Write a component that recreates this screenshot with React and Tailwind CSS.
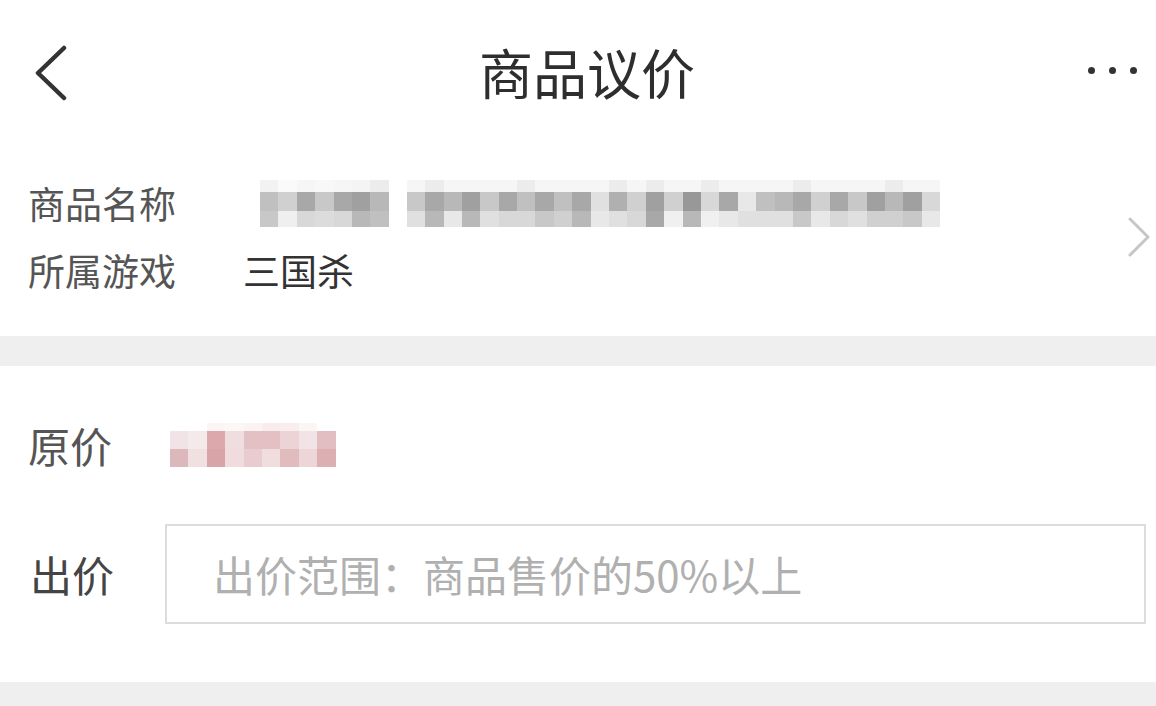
import React from "react";

const FONT = { fontFamily: '"Noto Sans CJK SC", "Noto Sans", sans-serif' };

const nameTop1 = ["#f2f2f2", "#fafafa", "#f6f6f6", "#f8f8f8", "#f6f6f6", "#f4f4f4", "#ececec"];
const nameMid1 = ["#c0c0c0", "#d0d0d0", "#a8a8a8", "#c8c8c8", "#a8a8a8", "#a0a0a0", "#b8b8b8"];
const nameBot1 = ["#c8c8c8", "#efefef", "#d8d8d8", "#dcdcdc", "#d8d8d8", "#b8b8b8", "#c0c0c0"];

const nameMid2 = [
  "#c8c8c8", "#a8a8a8", "#b8b8b8", "#a0a0a0", "#c8c8c8", "#a8a8a8", "#c0c0c0", "#a8a8a8",
  "#c0c0c0", "#a8a8a8", "#e0e0e0", "#b0b0b0", "#d0d0d0", "#a0a0a0", "#d0d0d0", "#989898",
  "#d8d8d8", "#a8a8a8", "#e8e8e8", "#c0c0c0", "#b8b8b8", "#a8a8a8", "#d0d0d0", "#a8a8a8",
  "#c8c8c8", "#a0a0a0", "#b8b8b8", "#a0a0a0", "#d8d8d8",
];
const nameBot2 = [
  "#e0e0e0", "#b8b8b8", "#e8e8e8", "#b8b8b8", "#e0e0e0", "#d8d8d8", "#d8d8d8", "#c8c8c8",
  "#d0d0d0", "#b8b8b8", "#e8e8e8", "#e0e0e0", "#d8d8d8", "#a8a8a8", "#f0f0f0", "#b8b8b8",
  "#f0f0f0", "#e8e8e8", "#e0e0e0", "#e0e0e0", "#e0e0e0", "#c8c8c8", "#e8e8e8", "#d8d8d8",
  "#e0e0e0", "#d0d0d0", "#d0d0d0", "#c8c8c8", "#e8e8e8",
];
const nameTop2 = nameMid2.map((_, i) => (i % 5 === 1 || i === 13 ? "#ececec" : "#f6f6f6"));

const pinkTop = ["#ffffff", "#ffffff", "#fbf5f5", "#fbf7f7", "#faf2f3", "#f8eced", "#f8eeef", "#fbf6f6", "#ffffff"];
const pinkRow1 = ["#f2e4e6", "#f4eaeb", "#dca8ac", "#efdde0", "#e2c0c4", "#e4c0c4", "#ecd4d6", "#f2e4e6", "#e2bec2"];
const pinkRow2 = ["#dcb8bc", "#f0e0e2", "#d8a4a8", "#f0dcde", "#e8ccd0", "#f0dede", "#e0bcbe", "#ecd6d8", "#dcb0b2"];

const MosaicRow = ({ colors, h }) => (
  <div className="flex">
    {colors.map((c, i) => (
      <div key={i} className="w-[18.4px]" style={{ backgroundColor: c, height: h }} />
    ))}
  </div>
);

const NameMosaic = () => (
  <div className="flex gap-[18px] ml-[17px] blur-[0.6px]">
    <div className="flex flex-col">
      <MosaicRow colors={nameTop1} h={12} />
      <MosaicRow colors={nameMid1} h={19} />
      <MosaicRow colors={nameBot1} h={16} />
    </div>
    <div className="flex flex-col">
      <MosaicRow colors={nameTop2} h={12} />
      <MosaicRow colors={nameMid2} h={19} />
      <MosaicRow colors={nameBot2} h={16} />
    </div>
  </div>
);

const PriceMosaic = () => (
  <div className="flex flex-col ml-[5px] blur-[0.6px]">
    <MosaicRow colors={pinkTop} h={8} />
    <MosaicRow colors={pinkRow1} h={18} />
    <MosaicRow colors={pinkRow2} h={18} />
  </div>
);

export default function App() {
  return (
    <div className="w-[1156px] min-h-[706px] bg-[#efefef] overflow-hidden" style={FONT}>
      {/* Header */}
      <div className="flex items-center h-[146px] bg-white">
        <div className="w-[110px] pl-[33px] flex items-center">
          <svg width="36" height="56" viewBox="0 0 36 56" fill="none">
            <path d="M31 3 L5 28 L31 53" stroke="#333" strokeWidth="4.5" strokeLinecap="round" strokeLinejoin="round" />
          </svg>
        </div>
        <div className="flex-1 text-center text-[54px] leading-none text-[#2e2e2e] pb-[2px]">商品议价</div>
        <div className="w-[92px] flex items-center gap-[14px] pl-[24px] pb-[6px]">
          <span className="shrink-0 w-[7px] h-[7px] rounded-full bg-[#333]" />
          <span className="shrink-0 w-[7px] h-[7px] rounded-full bg-[#333]" />
          <span className="shrink-0 w-[7px] h-[7px] rounded-full bg-[#333]" />
        </div>
      </div>

      {/* Goods info */}
      <div className="flex items-center bg-white h-[190px] pt-[24px] pb-[32px] pl-[28px] pr-[4px]">
        <div className="flex-1 flex flex-col">
          <div className="flex items-center h-[67px]">
            <div className="w-[215px] text-[37px] leading-none text-[#555]">商品名称</div>
            <NameMosaic />
          </div>
          <div className="flex items-center h-[67px]">
            <div className="w-[215px] text-[37px] leading-none text-[#555]">所属游戏</div>
            <div className="text-[37px] leading-none text-[#333]">三国杀</div>
          </div>
        </div>
        <svg width="26" height="42" viewBox="0 0 26 42" fill="none">
          <path d="M4 3 L22 21 L4 39" stroke="#c6c6c6" strokeWidth="3" strokeLinecap="round" strokeLinejoin="round" />
        </svg>
      </div>

      <div className="h-[30px] bg-[#efefef]" />

      {/* Price */}
      <div className="flex flex-col bg-white pt-[56px] pb-[58px] pl-[28px] pr-[10px]">
        <div className="flex items-center h-[46px]">
          <div className="w-[137px] text-[42px] leading-none text-[#555]">原价</div>
          <PriceMosaic />
        </div>
        <div className="flex items-center h-[100px] mt-[56px]">
          <div className="w-[137px] text-[42px] leading-none text-[#444] pl-[2px]">出价</div>
          <div className="flex-1 h-[100px] border-2 border-[#dcdcdc] flex items-center pl-[46px]">
            <span className="text-[42px] leading-none text-[#b0b0b0]">出价范围：商品售价的50%以上</span>
          </div>
        </div>
      </div>
    </div>
  );
}
